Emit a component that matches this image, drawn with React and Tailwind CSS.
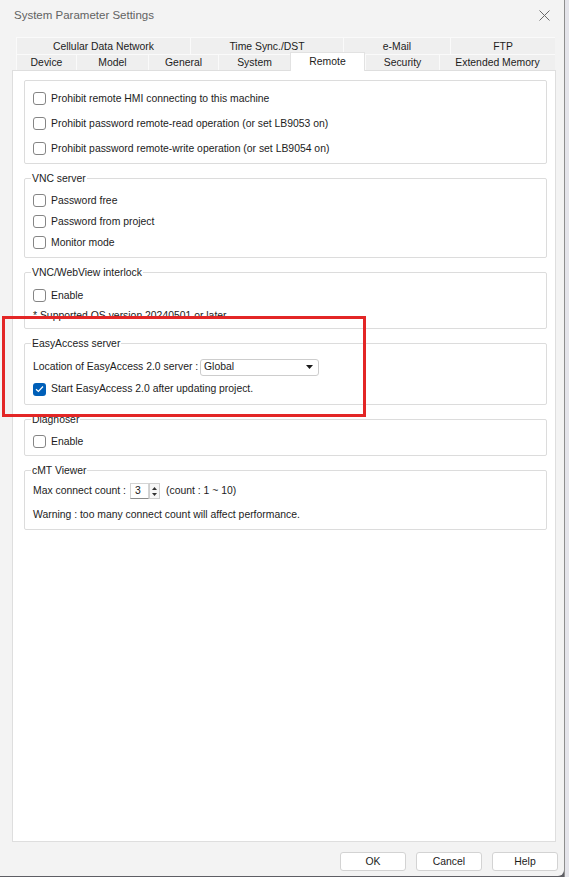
import React from 'react';

const FONT = "font-['Liberation_Sans',Arial,sans-serif]";

const topTabs = [
  { label: 'Cellular Data Network', w: 'w-[174px]' },
  { label: 'Time Sync./DST', w: 'w-[153px]' },
  { label: 'e-Mail', w: 'w-[107px]' },
  { label: 'FTP', w: 'w-[105px]' },
];

const bottomTabs = [
  { label: 'Device', w: 'w-[60px]' },
  { label: 'Model', w: 'w-[72px]' },
  { label: 'General', w: 'w-[70px]' },
  { label: 'System', w: 'w-[72px]' },
  { label: 'Remote', w: 'w-[75px]', active: true },
  { label: 'Security', w: 'w-[74px]' },
  { label: 'Extended Memory', w: 'w-[116px]' },
];

function Check({ checked }) {
  if (checked) {
    return (
      <span className="w-[13px] h-[13px] rounded-[3px] bg-[#005fb8] flex items-center justify-center shrink-0">
        <svg width="9" height="8" viewBox="0 0 9 8">
          <path d="M1 4.2 L3.4 6.5 L8 1.5" fill="none" stroke="#fff" strokeWidth="1.2" />
        </svg>
      </span>
    );
  }
  return <span className="w-[13px] h-[13px] rounded-[3px] border border-[#858585] bg-white shrink-0" />;
}

function CheckRow({ label, checked, h = 'h-[21px]' }) {
  return (
    <div className={`${h} flex items-center gap-[5px]`}>
      <Check checked={checked} />
      <span>{label}</span>
    </div>
  );
}

function Group({ title, className = '', children }) {
  return (
    <fieldset className={`w-[523px] border border-[#dcdcdc] rounded-[2px] px-2 ${className}`}>
      {title && <legend className="leading-[13px] px-[1px] -ml-[2px] text-[#222]">{title}</legend>}
      {children}
    </fieldset>
  );
}

export default function App() {
  return (
    <div className={`w-[569px] h-[877px] flex bg-[#5e5e64] ${FONT} text-[10.4px] text-[#1c1c1c]`}>
      <div className="relative w-[564px] h-[876px] bg-[#f3f3f3] rounded-br-[6px] flex flex-col">
        {/* Title bar */}
        <div className="h-[37px] flex justify-between pl-[14px] pr-[14px] pt-[8px]">
          <span className="text-[11.5px] leading-[14px] text-[#626262]">System Parameter Settings</span>
          <svg width="11" height="11" viewBox="0 0 11 11" className="mt-[2px]">
            <path d="M0.5 0.5 L10.5 10.5 M10.5 0.5 L0.5 10.5" stroke="#6a6a6a" strokeWidth="1" />
          </svg>
        </div>

        {/* Tabs */}
        <div className="ml-[16px] w-[539px]">
          <div className="flex h-[17px]">
            {topTabs.map((t) => (
              <div
                key={t.label}
                className={`${t.w} bg-[#efefef] border-l border-t border-[#fafafa] flex items-center justify-center leading-[13px]`}
              >
                {t.label}
              </div>
            ))}
          </div>
          <div className="flex h-[16px]">
            {bottomTabs.map((t) =>
              t.active ? (
                <div
                  key={t.label}
                  className={`${t.w} relative z-10 -mt-[2px] h-[19px] bg-white border-l border-r border-t border-[#e2e2e2] flex items-center justify-center leading-[13px] pb-[1px]`}
                >
                  {t.label}
                </div>
              ) : (
                <div
                  key={t.label}
                  className={`${t.w} bg-[#efefef] border-l border-t border-[#fafafa] flex items-center justify-center leading-[13px]`}
                >
                  {t.label}
                </div>
              )
            )}
          </div>
        </div>

        {/* Tab page */}
        <div className="ml-[12px] w-[544px] h-[772px] bg-white border border-[#dedede] pl-[11px] pt-[9px] flex flex-col gap-2">
          <div className="w-[523px] border border-[#dcdcdc] rounded-[2px] px-2 pt-[5px] pb-[2px]">
            <CheckRow h="h-[25px]" label="Prohibit remote HMI connecting to this machine" />
            <CheckRow h="h-[25px]" label="Prohibit password remote-read operation (or set LB9053 on)" />
            <CheckRow h="h-[25px]" label="Prohibit password remote-write operation (or set LB9054 on)" />
          </div>

          <Group title="VNC server" className="pt-[5px] pb-[4px]">
            <CheckRow label="Password free" />
            <CheckRow label="Password from project" />
            <CheckRow label="Monitor mode" />
          </Group>

          <Group title="VNC/WebView interlock" className="pt-[6px] pb-[2px]">
            <CheckRow label="Enable" />
            <div className="h-[20px] flex items-center">* Supported OS version 20240501 or later</div>
          </Group>

          <Group title="EasyAccess server" className="pt-[6px] pb-[4px]">
            <div className="h-[22px] flex items-center">
              <span className="w-[167px] shrink-0 whitespace-nowrap">Location of EasyAccess 2.0 server :</span>
              <div className="w-[119px] h-[17px] bg-white border border-[#cdcdcd] rounded-[3px] flex items-center justify-between pl-[3px] pr-[5px]">
                <span>Global</span>
                <svg width="7" height="4" viewBox="0 0 7 4">
                  <path d="M0 0 L7 0 L3.5 4 Z" fill="#1a1a1a" />
                </svg>
              </div>
            </div>
            <CheckRow h="h-[22px]" checked label="Start EasyAccess 2.0 after updating project." />
          </Group>

          <Group title="Diagnoser" className="pt-[5px] pb-[3px]">
            <CheckRow label="Enable" />
          </Group>

          <Group title="cMT Viewer" className="pt-[3px] pb-[1px]">
            <div className="h-[22px] flex items-center">
              <span className="w-[97px] shrink-0 whitespace-nowrap">Max connect count :</span>
              <div className="flex h-[16px]">
                <div className="w-[19px] h-[16px] bg-white border border-[#d4d4d4] border-b-[#8a8a8a] pl-[4px] flex items-center">
                  3
                </div>
                <div className="w-[11px] h-[16px] border border-[#cfcfcf] bg-[#f7f7f7] flex flex-col items-center justify-center gap-[3px]">
                  <svg width="5" height="3" viewBox="0 0 5 3">
                    <path d="M0 3 L5 3 L2.5 0 Z" fill="#333" />
                  </svg>
                  <svg width="5" height="3" viewBox="0 0 5 3">
                    <path d="M0 0 L5 0 L2.5 3 Z" fill="#333" />
                  </svg>
                </div>
              </div>
              <span className="ml-[6px]">(count : 1 ~ 10)</span>
            </div>
            <div className="h-[26px] flex items-center">Warning : too many connect count will affect performance.</div>
          </Group>
        </div>

        {/* Buttons */}
        <div className="mt-[10px] flex justify-end gap-[10px] pr-[6px]">
          {['OK', 'Cancel', 'Help'].map((b) => (
            <button
              key={b}
              className="w-[66px] h-[19px] bg-white border border-[#d3d3d3] rounded-[3px] flex items-center justify-center leading-[13px]"
            >
              {b}
            </button>
          ))}
        </div>

        {/* Highlight annotation */}
        <div className="absolute left-[2px] top-[316px] w-[364px] h-[101px] border-[3px] border-[#e32626]" />
      </div>

      {/* Window behind */}
      <div className="w-[5px] h-[877px] bg-[#e4e4ea] border-l border-[#8e8e8e]" />
    </div>
  );
}
